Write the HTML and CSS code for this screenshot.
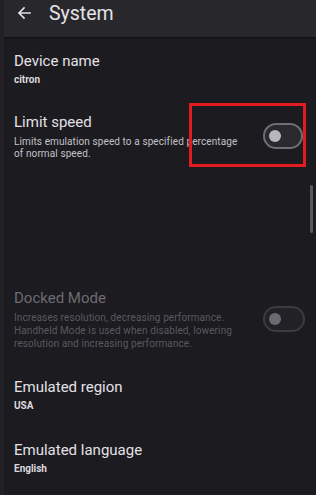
FILE: index.html
```html
<!DOCTYPE html>
<html>
<head>
<meta charset="utf-8">
<link rel="stylesheet" href="styles.css">
</head>
<body>
<div class="screen">
  <header class="topbar">
    <svg class="back" width="14" height="14" viewBox="0 0 14 14"><path d="M13 7H2M7 2L2 7l5 5" fill="none" stroke="#e4e2e8" stroke-width="1.6" stroke-linecap="square"/></svg>
    <span class="title">System</span>
  </header>
  <main class="list">
    <div class="item device">
      <div class="text">
        <div class="name">Device name</div>
        <div class="value">citron</div>
      </div>
    </div>
    <div class="item limit">
      <div class="text">
        <div class="name">Limit speed</div>
        <div class="desc">Limits emulation speed to a specified percentage of normal speed.</div>
      </div>
      <div class="switch"><span class="thumb"></span></div>
      <div class="highlight"></div>
    </div>
    <div class="blank"><div class="scrollbar"></div></div>
    <div class="item docked disabled">
      <div class="text">
        <div class="name">Docked Mode</div>
        <div class="desc">Increases resolution, decreasing performance. Handheld Mode is used when disabled, lowering resolution and increasing performance.</div>
      </div>
      <div class="switch"><span class="thumb"></span></div>
    </div>
    <div class="item region">
      <div class="text">
        <div class="name">Emulated region</div>
        <div class="value">USA</div>
      </div>
    </div>
    <div class="item language">
      <div class="text">
        <div class="name">Emulated language</div>
        <div class="value">English</div>
      </div>
    </div>
  </main>
</div>
</body>
</html>
```
FILE: styles.css
```css
html, body {
  margin: 0;
  padding: 0;
  background: #1c1b20;
}
.screen {
  width: 316px;
  height: 495px;
  overflow: hidden;
  background: #1c1b20;
  font-family: Roboto, "Noto Sans", sans-serif;
  border-left: 4px solid #222126;
  box-sizing: border-box;
}
.topbar {
  height: 37px;
  background: #28272c;
  display: flex;
  align-items: center;
  padding-left: 13px;
  box-shadow: 0 1px 2px rgba(0,0,0,0.4);
}
.back {
  margin-top: -11px;
}
.title {
  margin-left: 18px;
  margin-top: -11px;
  color: #e4e2e8;
  font-size: 19.5px;
}
.list {
  display: flex;
  flex-direction: column;
  padding-top: 14px;
}
.item {
  position: relative;
  display: flex;
  align-items: center;
  padding: 0 10px;
}
.limit { margin-top: 25px; }
.docked { margin-top: 0; }
.region { margin-top: 27px; }
.language { margin-top: 27px; }
.name {
  color: #e3e1e6;
  font-size: 15px;
  line-height: 20px;
}
.value {
  color: #dcd9df;
  font-size: 10px;
  font-weight: 700;
  line-height: 14px;
  margin-top: 2px;
}
.desc {
  color: #c4c1c8;
  font-size: 10px;
  letter-spacing: 0.1px;
  line-height: 12px;
  margin-top: 4px;
  max-width: 228px;
}
.docked .desc {
  line-height: 13px;
  margin-top: 3px;
}
.text {
  flex: 1;
  min-width: 0;
}
.switch {
  width: 32px;
  height: 22px;
  border: 2px solid #6f6d74;
  border-radius: 13px;
  background: #2a292e;
  display: flex;
  align-items: center;
  padding-left: 4px;
  box-sizing: content-box;
  flex-shrink: 0;
  margin-right: 3px;
}
.docked .switch {
  margin-right: 1px;
  width: 34px;
}
.thumb {
  width: 12px;
  height: 12px;
  border-radius: 50%;
  background: #b9b6be;
}
.highlight {
  position: absolute;
  left: 185px;
  top: -9px;
  width: 111px;
  height: 58px;
  border: 3px solid #e31b20;
}
.blank {
  position: relative;
  height: 128px;
}
.scrollbar {
  position: absolute;
  right: 3px;
  top: 25px;
  width: 3px;
  height: 48px;
  background: #58575c;
  border-radius: 2px;
}
.disabled .name { color: #6d6b71; }
.disabled .desc { color: #5a595e; }
.disabled .switch {
  border-color: #3c3b40;
  background: #222126;
}
.disabled .thumb { background: #6b6a70; }
```
